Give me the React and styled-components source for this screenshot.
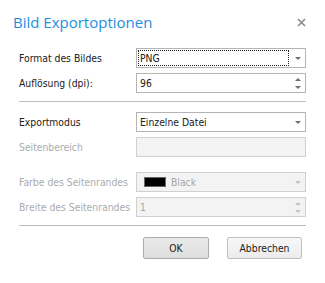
import React from 'react';
import styled, { createGlobalStyle } from 'styled-components';

const GlobalStyle = createGlobalStyle`
  html, body { margin: 0; padding: 0; background: #fff; }
  body { font-family: "DejaVu Sans Condensed", "DejaVu Sans", sans-serif; }
`;

const Dialog = styled.div`
  width: 325px;
  height: 283px;
  background: #fff;
  box-sizing: border-box;
  display: flex;
  flex-direction: column;
`;

const Header = styled.div`
  height: 48px;
  display: flex;
  align-items: flex-start;
  justify-content: space-between;
  padding: 11px 19px 0 13px;
  box-sizing: border-box;
`;

const Title = styled.h1`
  margin: 0;
  font-family: "Open Sans", sans-serif;
  font-weight: 400;
  font-size: 15px;
  line-height: 22px;
  color: #1e8ee0;
`;

const Close = styled.button`
  border: 0;
  background: none;
  padding: 0;
  margin-top: 7px;
  width: 9px;
  height: 9px;
  cursor: pointer;
  display: flex;
`;

const Body = styled.div`
  padding: 0 19px;
  display: flex;
  flex-direction: column;
`;

const Group = styled.div`
  display: flex;
  flex-direction: column;
  gap: 5px;
  margin-top: ${({ top }) => top || 0}px;
`;

const Row = styled.div`
  display: grid;
  grid-template-columns: 117px 170px;
  align-items: center;
  height: 20px;
`;

const Label = styled.label`
  font-size: 10.3px;
  color: ${({ disabled }) => (disabled ? '#ababab' : '#202020')};
  white-space: nowrap;
`;

const Field = styled.div`
  position: relative;
  height: 20px;
  box-sizing: border-box;
  border: 1px solid ${({ disabled }) => (disabled ? '#d0d0d0' : '#b4b4b4')};
  background: ${({ disabled }) => (disabled ? '#f3f3f3' : '#fff')};
  display: flex;
  align-items: center;
  padding: 0 2px;
  font-size: 10.3px;
  color: ${({ disabled }) => (disabled ? '#a8a8a8' : '#202020')};
`;

const FieldText = styled.span`
  flex: 1;
  display: flex;
  align-items: center;
  gap: 5px;
  height: 16px;
  box-sizing: border-box;
  margin-left: -1px;
  padding-left: 1px;
  margin-right: 14px;
  border: 1px dotted ${({ focused }) => (focused ? '#222' : 'transparent')};
`;

const Swatch = styled.span`
  width: 20px;
  height: 8px;
  background: #000;
  border: 1px solid #666;
  margin-left: 4px;
`;

const Arrows = styled.span`
  position: absolute;
  right: 4px;
  top: 0;
  bottom: 0;
  display: flex;
  flex-direction: column;
  justify-content: center;
  gap: ${({ spin }) => (spin ? '5px' : '0')};
`;

const Tri = styled.span`
  width: 0;
  height: 0;
  border-left: 3px solid transparent;
  border-right: 3px solid transparent;
  ${({ up }) => (up ? 'border-bottom' : 'border-top')}: 3px solid
    ${({ disabled }) => (disabled ? '#c4c4c4' : '#6e6e6e')};
`;

const Separator = styled.hr`
  border: 0;
  border-top: 1px solid #bcbcbc;
  margin: ${({ m }) => m};
  width: 100%;
`;

const Buttons = styled.div`
  display: flex;
  justify-content: flex-end;
  gap: 18px;
  padding-right: 4px;
`;

const Button = styled.button`
  height: 22px;
  width: ${({ w }) => w}px;
  border: 1px solid ${({ primary }) => (primary ? '#acacac' : '#c0c0c0')};
  border-radius: 2px;
  background: ${({ primary }) =>
    primary ? 'linear-gradient(#e9e9e9, #dedede)' : 'linear-gradient(#f7f7f7, #ececec)'};
  font-family: "DejaVu Sans Condensed", "DejaVu Sans", sans-serif;
  font-size: 10.3px;
  color: #202020;
  padding: 0;
`;

const Combo = ({ value, focused, disabled, swatch }) => (
  <Field disabled={disabled}>
    <FieldText focused={focused}>
      {swatch && <Swatch />}
      {value}
    </FieldText>
    <Arrows>
      <Tri disabled={disabled} />
    </Arrows>
  </Field>
);

const Spin = ({ value, disabled }) => (
  <Field disabled={disabled}>
    <FieldText>{value}</FieldText>
    <Arrows spin>
      <Tri up disabled={disabled} />
      <Tri disabled={disabled} />
    </Arrows>
  </Field>
);

export default function App() {
  return (
    <>
      <GlobalStyle />
      <Dialog>
        <Header>
          <Title>Bild Exportoptionen</Title>
          <Close aria-label="Schließen">
            <svg width="9" height="9" viewBox="0 0 9 9">
              <path d="M1 1L8 8M8 1L1 8" stroke="#8a8a8a" strokeWidth="1.6" />
            </svg>
          </Close>
        </Header>
        <Body>
          <Group>
            <Row>
              <Label>Format des Bildes</Label>
              <Combo value="PNG" focused />
            </Row>
            <Row>
              <Label>Auflösung (dpi):</Label>
              <Spin value="96" />
            </Row>
          </Group>
          <Separator m="8px 0 0" />
          <Group top={10}>
            <Row>
              <Label>Exportmodus</Label>
              <Combo value="Einzelne Datei" />
            </Row>
            <Row>
              <Label disabled>Seitenbereich</Label>
              <Field disabled />
            </Row>
          </Group>
          <Group top={15}>
            <Row>
              <Label disabled>Farbe des Seitenrandes</Label>
              <Combo value="Black" disabled swatch />
            </Row>
            <Row>
              <Label disabled>Breite des Seitenrandes</Label>
              <Spin value="1" disabled />
            </Row>
          </Group>
          <Separator m="8px 0 11px" />
          <Buttons>
            <Button primary w={66}>OK</Button>
            <Button w={75}>Abbrechen</Button>
          </Buttons>
        </Body>
      </Dialog>
    </>
  );
}
